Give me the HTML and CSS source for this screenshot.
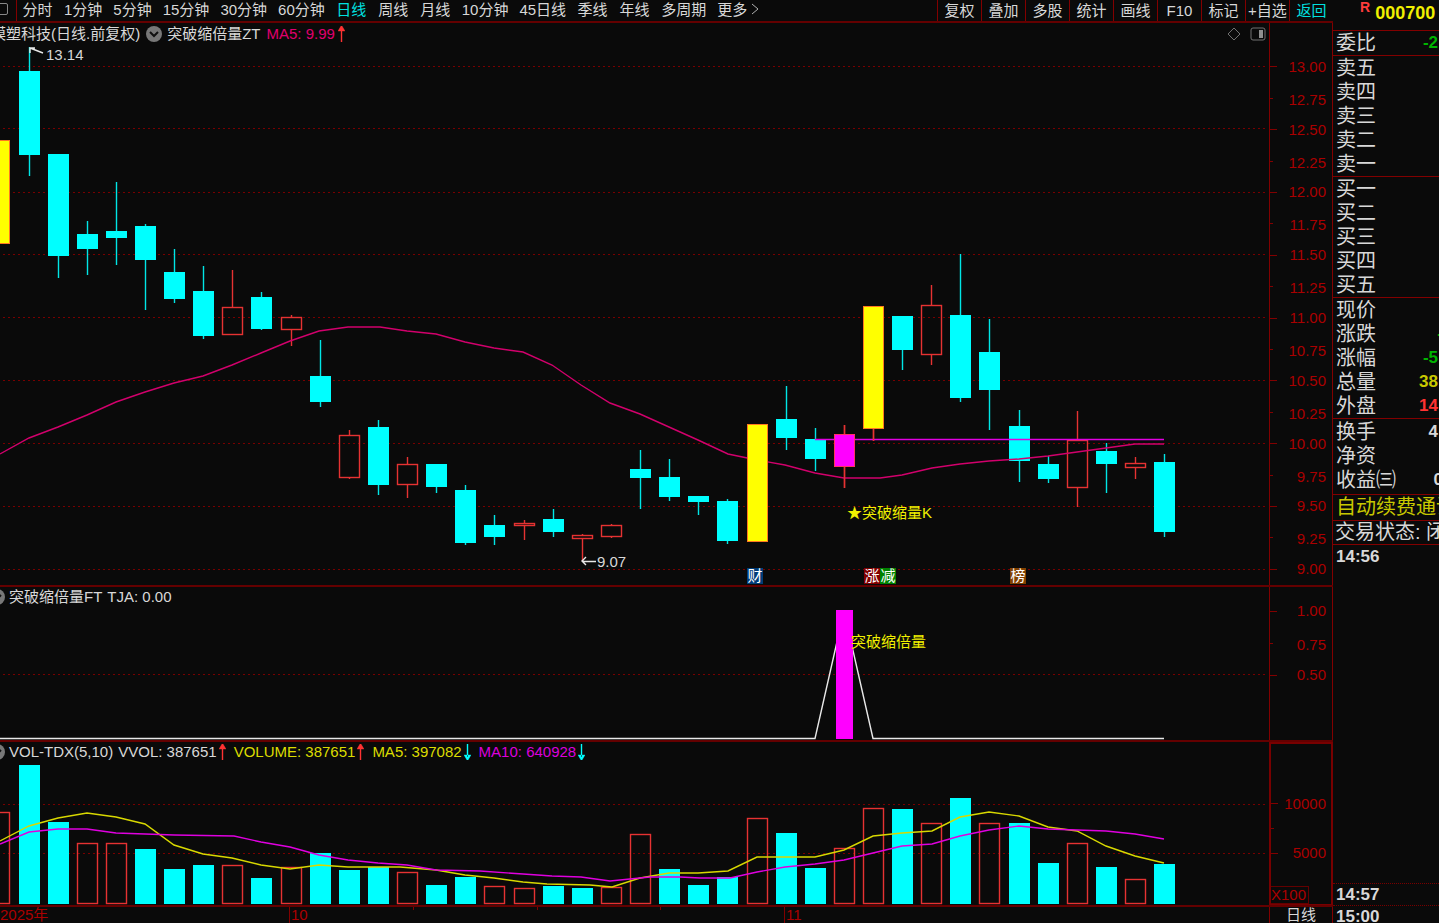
FILE: index.html
```html
<!DOCTYPE html>
<html lang="zh-CN">
<head>
    <meta charset="UTF-8">
    <meta name="viewport" content="width=device-width, initial-scale=1.0">
    <title>000700 日线</title>
    <link rel="stylesheet" href="styles.css">
</head>
<body>
    <div class="main">
        <nav class="toolbar">
            <div class="periods">
                <button class="window-btn" aria-label="窗口"><span class="square"></span></button>
                <button>分时</button>
                <button>1分钟</button>
                <button>5分钟</button>
                <button>15分钟</button>
                <button>30分钟</button>
                <button>60分钟</button>
                <button class="active">日线</button>
                <button>周线</button>
                <button>月线</button>
                <button>10分钟</button>
                <button>45日线</button>
                <button>季线</button>
                <button>年线</button>
                <button>多周期</button>
                <button class="more">更多
                    <svg width="8" height="12" viewBox="0 0 8 12"><path d="M1 1l6 5-6 5"/></svg>
                </button>
            </div>
            <div class="tools">
                <button>复权</button>
                <button>叠加</button>
                <button>多股</button>
                <button>统计</button>
                <button>画线</button>
                <button>F10</button>
                <button>标记</button>
                <button>+自选</button>
                <button class="active">返回</button>
            </div>
        </nav>

        <section class="panel">
            <div class="chart">
                <svg class="plot" id="kline" viewBox="0 23 1269 562" preserveAspectRatio="none"></svg>
                <div class="legend legend-main">
                    <span>模塑科技(日线.前复权)</span>
                    <svg class="drop" width="16" height="16" viewBox="0 0 16 16"><circle cx="8" cy="8" r="8"/><path d="M4 6l4 4 4-4"/></svg>
                    <span>突破缩倍量ZT</span>
                    <span class="pink">MA5: 9.99</span>
                    <svg class="arrow up" width="7" height="16" viewBox="0 0 7 16"><path d="M3 3h1v13h-1zM0 5l3-5h1l3 5z"/></svg>
                    <span class="corner">
                        <svg width="14" height="14" viewBox="0 0 14 14"><path d="M7 1l6 6-6 6-6-6z"/></svg>
                        <svg width="16" height="14" viewBox="0 0 16 14"><rect x="1" y="1" width="14" height="12" rx="2"/><path class="fill" d="M9 3h4v8h-4z"/></svg>
                    </span>
                </div>
            </div>
            <ol class="axis axis-price" id="priceAxis"></ol>
        </section>

        <section class="panel">
            <div class="chart">
                <svg class="plot" id="signal" viewBox="0 587 1269 153" preserveAspectRatio="none"></svg>
                <div class="legend">
                    <svg class="drop" width="16" height="16" viewBox="0 0 16 16"><circle cx="8" cy="8" r="8"/><path d="M4 6l4 4 4-4"/></svg>
                    <span>突破缩倍量FT</span>
                    <span>TJA: 0.00</span>
                </div>
            </div>
            <ol class="axis axis-signal">
                <li><span>1.00</span></li>
                <li class="minor"><span>0.75</span></li>
                <li><span>0.50</span></li>
            </ol>
        </section>

        <section class="panel">
            <div class="chart">
                <svg class="plot" id="volume" viewBox="0 742 1269 163" preserveAspectRatio="none"></svg>
                <div class="legend">
                    <svg class="drop" width="16" height="16" viewBox="0 0 16 16"><circle cx="8" cy="8" r="8"/><path d="M4 6l4 4 4-4"/></svg>
                    <span>VOL-TDX(5,10)</span>
                    <span>VVOL: 387651</span>
                    <svg class="arrow up" width="7" height="16" viewBox="0 0 7 16"><path d="M3 3h1v13h-1zM0 5l3-5h1l3 5z"/></svg>
                    <span class="yellow">VOLUME: 387651</span>
                    <svg class="arrow up" width="7" height="16" viewBox="0 0 7 16"><path d="M3 3h1v13h-1zM0 5l3-5h1l3 5z"/></svg>
                    <span class="yellow">MA5: 397082</span>
                    <svg class="arrow down" width="7" height="16" viewBox="0 0 7 16"><path d="M3 0h1v13h-1zM0 11l3 5h1l3-5z"/></svg>
                    <span class="magenta">MA10: 640928</span>
                    <svg class="arrow down" width="7" height="16" viewBox="0 0 7 16"><path d="M3 0h1v13h-1zM0 11l3 5h1l3-5z"/></svg>
                </div>
            </div>
            <ol class="axis axis-vol">
                <li><span>10000</span></li>
                <li class="minor"></li>
                <li><span>5000</span></li>
                <li class="unit">X100</li>
            </ol>
        </section>

        <footer class="timeline">
            <div class="months">
                <span>2025年</span>
                <span class="month">10</span>
                <span class="week"></span>
                <span class="week"></span>
                <span class="week"></span>
                <span class="month">11</span>
            </div>
            <div class="period">日线</div>
        </footer>
    </div>

    <aside class="quote">
        <h1><sup>R</sup>000700</h1>
        <dl>
            <div><dt>委比</dt><dd class="green">-2</dd></div>
        </dl>
        <dl>
            <div><dt>卖五</dt></div>
            <div><dt>卖四</dt></div>
            <div><dt>卖三</dt></div>
            <div><dt>卖二</dt></div>
            <div><dt>卖一</dt></div>
        </dl>
        <dl>
            <div><dt>买一</dt></div>
            <div><dt>买二</dt></div>
            <div><dt>买三</dt></div>
            <div><dt>买四</dt></div>
            <div><dt>买五</dt></div>
        </dl>
        <dl>
            <div><dt>现价</dt></div>
            <div><dt>涨跌</dt><dd class="green cut">-</dd></div>
            <div><dt>涨幅</dt><dd class="green">-5</dd></div>
            <div><dt>总量</dt><dd class="gold">38</dd></div>
            <div><dt>外盘</dt><dd class="red">14</dd></div>
        </dl>
        <dl class="stats">
            <div><dt>换手</dt><dd>4</dd></div>
            <div><dt>净资</dt></div>
            <div><dt>收益㈢</dt><dd class="cut">0</dd></div>
        </dl>
        <p class="notice gold">自动续费通讯</p>
        <p class="status">交易状态: 闭市</p>
        <time>14:56</time>
        <div class="ticks">
            <time>14:57</time>
            <time>15:00</time>
        </div>
    </aside>

    <script src="chart.js"></script>
</body>
</html>
```
FILE: styles.css
```css
* {
    box-sizing: border-box;
}
body {
    margin: 0;
    height: 100vh;
    display: flex;
    overflow: hidden;
    background: #0a0a0a;
    color: #d8d8d8;
    font-family: "Liberation Sans", "Noto Sans CJK SC", sans-serif;
    font-size: 15px;
    line-height: 20px;
}
button {
    padding: 0;
    border: none;
    background: none;
    color: inherit;
    font: inherit;
    white-space: nowrap;
    cursor: pointer;
}
ol, dl, dd, p, h1 {
    margin: 0;
    padding: 0;
    list-style: none;
}
.main {
    flex: 1;
    min-width: 0;
    display: grid;
    grid-template-rows: 23px minmax(0, 564fr) minmax(0, 155fr) minmax(0, 165fr) 16px;
}

/* toolbar */
.toolbar {
    display: flex;
    justify-content: space-between;
    border-bottom: 2px solid #640000;
    overflow: hidden;
}
.periods {
    display: flex;
    gap: 11px;
}
.periods button {
    min-width: 31px;
    height: 20px;
}
.periods .window-btn {
    min-width: 17px;
    height: 21px;
    margin-right: -6px;
    border-right: 1px solid #820000;
}
.square {
    display: block;
    width: 12px;
    height: 12px;
    margin: -3px 0 0 -4px;
    border: 1px solid #888;
    border-radius: 2px;
}
.more svg {
    fill: none;
    stroke: #b0b0b0;
}
.tools {
    display: flex;
}
.tools button {
    width: 44px;
    height: 21px;
    line-height: 18px;
    border-left: 1px solid #820000;
}
.toolbar .active {
    color: #00e0e0;
}

/* panels */
.panel {
    display: grid;
    grid-template-columns: minmax(0, 1fr) 64px;
    grid-template-rows: minmax(0, 1fr);
    border-bottom: 2px solid #640000;
}
.chart {
    display: grid;
    grid-template-rows: minmax(0, 1fr);
    position: relative;
    overflow: hidden;
}
.plot {
    grid-area: 1 / 1;
    width: 100%;
    height: 100%;
}
.legend {
    grid-area: 1 / 1;
    align-self: start;
    display: flex;
    align-items: center;
    gap: 5px;
    height: 19px;
    margin-left: -11px;
    white-space: nowrap;
    z-index: 1;
}
.legend .drop {
    margin-right: -1px;
}
.legend-main {
    height: 22px;
    gap: 6px;
    margin-left: -9px;
}
.drop circle {
    fill: #787878;
}
.drop path {
    fill: none;
    stroke: #111;
    stroke-width: 2;
}
.arrow {
    margin-left: -3px;
    margin-right: 3px;
}
.arrow.up {
    fill: #ff3232;
    stroke: #ff3232;
    stroke-width: 0.4;
}
.arrow.down {
    fill: #00ffff;
    stroke: #00ffff;
    stroke-width: 0.4;
}
.corner {
    display: flex;
    gap: 9px;
    margin-left: auto;
    margin-right: 3px;
}
.corner svg {
    fill: none;
    stroke: #707070;
}
.corner .fill {
    fill: #909090;
    stroke: none;
}
.pink {
    color: #e0006e;
}
.yellow {
    color: #dcdc00;
}
.magenta {
    color: #dc00dc;
}
.gold {
    color: #c8c800;
}
.green {
    color: #00b400;
}
.red {
    color: #ff3232;
}

/* drawings */
.grid {
    stroke: #780000;
    stroke-dasharray: 2 3;
}
.cyan {
    fill: #00ffff;
}
.wick {
    stroke: #00e6e6;
    stroke-width: 1.4;
}
.rise {
    stroke: #e63232;
    stroke-width: 1.4;
}
.hollow {
    fill: none;
    stroke: #e63232;
    stroke-width: 1.4;
}
.solid-yellow {
    fill: #ffff00;
    stroke: #ff7820;
}
.solid-magenta {
    fill: #ff00ff;
    stroke: #ff3264;
}
.signal-bar {
    fill: #ff00ff;
}
.line {
    fill: none;
    stroke-width: 1.4;
}
.line-pink {
    stroke: #d2006c;
}
.line-yellow {
    stroke: #d8d800;
}
.line-magenta {
    stroke: #e000e0;
}
.line-white {
    stroke: #e8e8e8;
}
.note {
    position: absolute;
    line-height: 16px;
    white-space: nowrap;
}
.note.bright {
    color: #f0f000;
}
.badge {
    width: 16px;
    color: #fff;
    text-align: center;
    background: #003c78;
}
.badge-red {
    background: #820000;
}
.badge-green {
    background: #008200;
}
.badge-brown {
    background: #824100;
}

/* axes */
.axis {
    display: grid;
    border-left: 1px solid #820000;
    border-right: 1px solid #820000;
    color: #aa0000;
}
/* empty first row above the top label */
.axis::before {
    content: "";
}
.axis li {
    display: flex;
    align-items: center;
    justify-content: space-between;
    padding-right: 6px;
    min-height: 0;
    line-height: 16px;
}
.axis li::before {
    content: "";
    width: 7px;
    height: 1px;
    background: #820000;
}
.axis .minor::before {
    width: 3px;
}
.axis .minor span {
    padding-top: 3px;
}
.axis-price {
    grid-template-rows: 5% repeat(17, minmax(0, 1fr));
}
.axis-signal {
    grid-template-rows: 8fr repeat(3, minmax(0, 32fr)) 49fr;
}
.axis-vol {
    grid-template-rows: 48fr repeat(3, minmax(0, 25fr)) 39fr;
    border: 2px solid #780000;
    border-bottom-width: 1px;
}
.axis-vol li {
    padding-right: 5px;
}
.axis-vol .unit {
    align-self: end;
    justify-self: start;
    padding: 0 2px 0 0;
    border: 1px solid #640000;
    border-left: none;
}
.axis-vol .unit::before {
    display: none;
}

/* time line */
.timeline {
    display: grid;
    grid-template-columns: minmax(0, 1fr) 64px;
    color: #aa0000;
    line-height: 16px;
}
.months {
    display: grid;
    grid-template-columns: 289fr 124fr 124fr 123fr 124fr 485fr;
}
.month {
    padding-left: 1px;
    border-left: 1px solid #820000;
}
.week {
    height: 3px;
    border-left: 1px solid #820000;
}
.period {
    border-left: 1px solid #820000;
    border-right: 1px solid #820000;
    color: #d8d8d8;
    text-align: center;
}

/* quote column */
.quote {
    flex: 0 0 106px;
    display: flex;
    flex-direction: column;
    overflow: hidden;
    font-size: 20px;
    line-height: 24px;
    white-space: nowrap;
}
.quote h1 {
    height: 31px;
    padding-left: 27px;
    border-bottom: 1px solid #820000;
    color: #f0f000;
    font-size: 18px;
    line-height: 26px;
}
.quote sup {
    margin-right: 5px;
    color: #ff3c3c;
    font-size: 14px;
    line-height: 14px;
}
.quote dl {
    padding-left: 3px;
    border-bottom: 1px solid #820000;
}
.quote dl div {
    display: flex;
    justify-content: space-between;
}
.quote dt {
    height: 24px;
}
.quote dd {
    padding-right: 1px;
    font-size: 17px;
    font-weight: bold;
}
.quote .cut {
    margin-right: -5px;
}
.quote .stats {
    padding-top: 1px;
    padding-bottom: 2px;
}
.notice {
    height: 26px;
    padding-left: 3px;
    border-bottom: 1px solid #820000;
}
.status {
    height: 24px;
    padding-left: 2px;
    line-height: 22px;
    border-bottom: 1px solid #820000;
}
.quote time {
    padding-left: 3px;
    font-size: 17px;
    font-weight: bold;
}
.ticks {
    margin-top: auto;
    height: 40px;
}
.ticks time {
    display: block;
    height: 22px;
    line-height: 22px;
    border-top: 1px dotted #780000;
}
```
FILE: chart.js
```js
const NS = 'http://www.w3.org/2000/svg';
const WIDTH = 1269;

// kind, high, body top, body bottom, low, top of the volume bar, kind of the volume bar
// c = falling, r = rising, y / m = rising with a signal colour
const bars = [
    ['y', 140, 140, 244, 244, 812],
    ['c', 47, 71, 155, 176, 765],
    ['c', 154, 154, 256, 278, 822],
    ['c', 221, 234, 249, 275, 843, 'r'],
    ['c', 182, 231, 238, 265, 843, 'r'],
    ['c', 224, 226, 260, 310, 849],
    ['c', 249, 272, 299, 303, 869],
    ['c', 266, 291, 336, 339, 865],
    ['r', 270, 307, 335, 335, 865],
    ['c', 292, 297, 329, 330, 878],
    ['r', 315, 317, 330, 346, 867],
    ['c', 340, 376, 402, 407, 853],
    ['r', 430, 435, 478, 479, 870, 'c'],
    ['c', 420, 427, 485, 495, 867],
    ['r', 457, 464, 485, 498, 872],
    ['c', 464, 464, 487, 493, 885],
    ['c', 485, 490, 543, 545, 877],
    ['c', 515, 525, 537, 545, 886, 'r'],
    ['r', 520, 523, 526, 540, 888],
    ['c', 509, 519, 532, 537, 886],
    ['r', 534, 535, 539, 561, 888, 'c'],
    ['r', 524, 525, 537, 538, 887],
    ['c', 450, 469, 478, 509, 834, 'r'],
    ['c', 459, 477, 497, 501, 869],
    ['c', 496, 496, 502, 515, 885],
    ['c', 499, 501, 541, 544, 877],
    ['y', 424, 424, 542, 542, 818],
    ['c', 386, 419, 438, 450, 833],
    ['c', 428, 439, 459, 471, 868],
    ['m', 425, 434, 467, 488, 848],
    ['y', 306, 306, 429, 441, 808],
    ['c', 316, 316, 350, 370, 809],
    ['r', 285, 305, 355, 365, 823],
    ['c', 254, 315, 398, 402, 798],
    ['c', 319, 352, 390, 430, 823, 'r'],
    ['c', 410, 426, 461, 482, 823],
    ['c', 456, 464, 479, 483, 863],
    ['r', 411, 440, 488, 507, 843],
    ['c', 443, 451, 464, 493, 867],
    ['r', 457, 463, 468, 479, 879],
    ['c', 454, 462, 532, 537, 864]
];

const maPrice = '0,454 29,438 58,427 87,415 116,402 145,392 174,383 203,376 232,365 261,353 290,341 ' +
    '319,331 348,327 380,327 407,331 436,334 465,342 494,348 523,352 552,365 581,385 610,403 640,414 ' +
    '669,427 698,440 728,454 757,460 785,465 815,473 844,478 880,478 902,475 932,468 960,464 989,461 ' +
    '1019,459 1048,456 1077,452 1106,448 1135,444 1164,444';
const ma5 = '0,841 29,826 58,818 87,813 116,817 145,824 174,845 203,854 232,858 261,865 290,869 319,865 ' +
    '348,867 400,867 436,870 465,875 494,878 523,882 547,884 590,885 612,887 640,878 669,873 698,873 ' +
    '728,871 757,857 815,857 844,850 873,836 902,833 932,831 960,817 989,812 1019,816 1048,827 1077,831 ' +
    '1106,846 1135,856 1164,863';
const ma10 = '0,844 29,832 58,829 87,829 116,833 174,835 234,836 261,842 290,847 319,855 348,860 378,863 ' +
    '407,865 436,870 480,871 523,874 552,876 581,877 610,881 650,877 680,877 700,878 730,878 757,872 ' +
    '785,867 815,864 844,860 873,853 902,846 932,844 960,836 989,830 1019,826 1048,829 1106,831 1135,834 1164,839';

function add(svg, tag, cls, attrs) {
    const el = document.createElementNS(NS, tag);
    el.setAttribute('class', cls);
    for (const key in attrs) {
        el.setAttribute(key, attrs[key]);
    }
    svg.appendChild(el);
}

function line(svg, cls, x1, y1, x2, y2) {
    add(svg, 'path', cls, { d: `M${x1} ${y1}L${x2} ${y2}` });
}

function gridLines(svg, rows) {
    rows.forEach(y => line(svg, 'grid', 3, y + 0.5, WIDTH - 3, y + 0.5));
}

function body(svg, kind, x, top, bottom) {
    const names = { r: 'hollow', y: 'solid-yellow', m: 'solid-magenta' };
    if (kind === 'c') {
        add(svg, 'rect', 'cyan', { x: x - 10, y: top, width: 21, height: bottom - top });
    } else {
        add(svg, 'rect', names[kind], { x: x - 9.5, y: top + 0.5, width: 20, height: bottom - top - 1 });
    }
}

// notes are placed by percentage, so they follow the stretched drawing
function note(svg, x, y, text, cls) {
    const box = svg.viewBox.baseVal;
    const el = document.createElement('span');
    el.className = 'note ' + (cls || '');
    el.textContent = text;
    el.style.left = (x / WIDTH * 100) + '%';
    el.style.top = ((y - box.y) / box.height * 100) + '%';
    svg.parentNode.appendChild(el);
}

const xOf = i => Math.round(29.12 * i - 0.6);

function candle(svg, bar, i) {
    const [kind, high, top, bottom, low] = bar;
    const x = xOf(i);
    const wick = kind === 'c' ? 'wick' : 'rise';
    line(svg, wick, x + 0.5, high, x + 0.5, top);
    line(svg, wick, x + 0.5, bottom, x + 0.5, low);
    body(svg, kind, x, top, bottom);
}

const kline = document.getElementById('kline');
gridLines(kline, [66, 128, 192, 254, 317, 380, 443, 506, 569]);
bars.forEach((bar, i) => candle(kline, bar, i));
add(kline, 'polyline', 'line line-pink', { points: maPrice });
line(kline, 'line line-magenta', 815, 439.5, 1164, 439.5);
// signal candles cover the lines
bars.forEach((bar, i) => {
    if (bar[0] === 'y' || bar[0] === 'm') {
        candle(kline, bar, i);
    }
});
add(kline, 'path', 'line line-white', { d: 'M43 53L30 48M30 53V48H35' });
add(kline, 'path', 'line line-white', { d: 'M596 561.5H582M586 557L582 561L586 565' });
note(kline, 46, 47, '13.14');
note(kline, 597, 554, '9.07');
note(kline, 847, 505, '★突破缩量K', 'bright');
note(kline, 747, 568, '财', 'badge');
note(kline, 864, 568, '涨', 'badge badge-red');
note(kline, 880, 568, '减', 'badge badge-green');
note(kline, 1010, 568, '榜', 'badge badge-brown');

const priceAxis = document.getElementById('priceAxis');
for (let price = 13; price >= 9; price -= 0.25) {
    const li = document.createElement('li');
    li.className = price % 0.5 ? 'minor' : '';
    li.innerHTML = `<span>${price.toFixed(2)}</span>`;
    priceAxis.appendChild(li);
}

const signal = document.getElementById('signal');
gridLines(signal, [674]);
add(signal, 'polyline', 'line line-white', { points: '0,738.5 815,738.5 844,611 873,738.5 1164,738.5' });
add(signal, 'rect', 'signal-bar', { x: 836, y: 610, width: 17, height: 129 });
note(signal, 851, 634, '突破缩倍量', 'bright');

const volume = document.getElementById('volume');
gridLines(volume, [804, 853]);
bars.forEach((bar, i) => {
    const kind = bar[6] || (bar[0] === 'c' ? 'c' : 'r');
    body(volume, kind, xOf(i), bar[5], 904);
});
add(volume, 'polyline', 'line line-yellow', { points: ma5 });
add(volume, 'polyline', 'line line-magenta', { points: ma10 });
```
